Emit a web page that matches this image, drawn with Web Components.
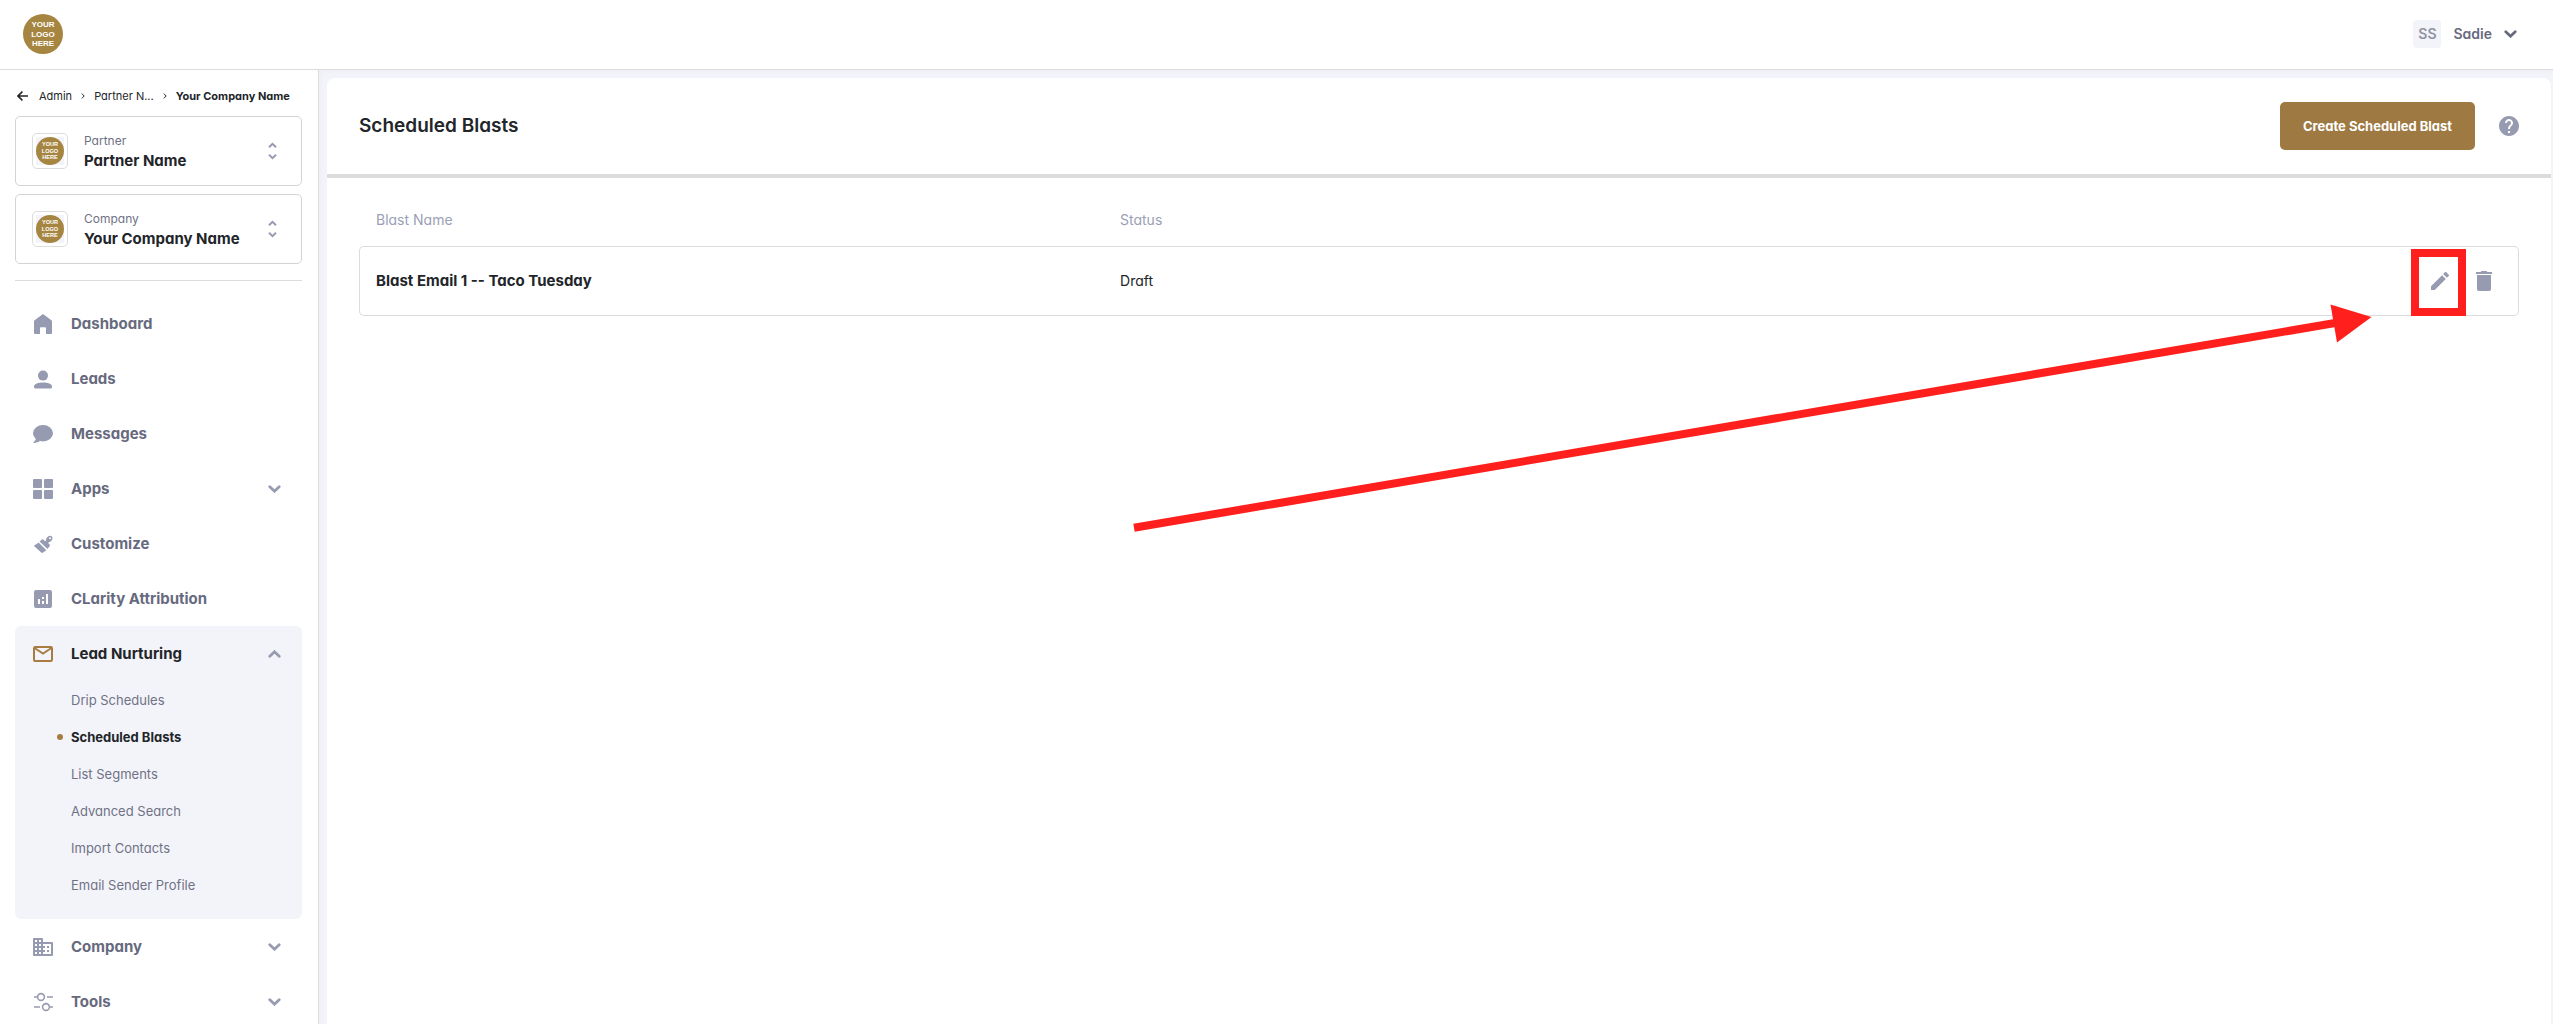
<!DOCTYPE html>
<html lang="en">
<head>
<meta charset="utf-8">
<title>Scheduled Blasts</title>
<style>
  :root {
    --ink: #222529;
    --nav: #676a7e;
    --muted: #6f7286;
    --icon: #979bb1;
    --line: #dcdcde;
    --wash: #f3f4f9;
    --brand: #9e7942;
  }
  html, body { margin: 0; height: 100%; }
  body {
    font-family: Inter, "Open Sans", sans-serif;
    font-feature-settings: "cv11";
    font-size: 14px;
    line-height: 20px;
    color: var(--ink);
    background: #fff;
  }
</style>
</head>
<body>
<app-shell>
  <top-bar slot="top" initials="SS" name="Sadie"></top-bar>
  <side-bar slot="side">
    <bread-crumbs slot="head"></bread-crumbs>
    <account-picker slot="head" label="Partner" name="Partner Name"></account-picker>
    <account-picker slot="head" label="Company" name="Your Company Name"></account-picker>
    <nav-item icon="home">Dashboard</nav-item>
    <nav-item icon="person">Leads</nav-item>
    <nav-item icon="chat">Messages</nav-item>
    <nav-item icon="apps" expandable>Apps</nav-item>
    <nav-item icon="brush">Customize</nav-item>
    <nav-item icon="chart">CLarity Attribution</nav-item>
    <nav-group icon="mail" label="Lead Nurturing">
      <sub-item>Drip Schedules</sub-item>
      <sub-item current>Scheduled Blasts</sub-item>
      <sub-item>List Segments</sub-item>
      <sub-item>Advanced Search</sub-item>
      <sub-item>Import Contacts</sub-item>
      <sub-item>Email Sender Profile</sub-item>
    </nav-group>
    <nav-item icon="building" expandable>Company</nav-item>
    <nav-item icon="tools" expandable>Tools</nav-item>
  </side-bar>
  <page-panel heading="Scheduled Blasts" action="Create Scheduled Blast">
    <blast-table></blast-table>
  </page-panel>
</app-shell>

<script>
const ICONS = {
  home: ['0 0 20 20', 20, 20, '<path d="M10 0L1.6 6.2Q1 6.7 1 7.4V19Q1 20 2 20H7V14Q7 13.3 7.8 13.3H12.2Q13 13.3 13 14V20H18Q19 20 19 19V7.4Q19 6.7 18.4 6.2Z"/>'],
  person: ['0 0 20 20', 20, 20, '<circle cx="10" cy="6.6" r="5"/><path d="M1 18V17.2C1 14.8 5.5 13.4 10 13.4S19 14.8 19 17.2V18Q19 19.4 17.8 19.4H2.2Q1 19.4 1 18Z"/>'],
  chat: ['0 0 20 20', 20, 20, '<ellipse cx="10" cy="9.2" rx="10" ry="8.2"/><path d="M2.4 13.5C3.6 15.6 1.6 17.3 .5 18.2C.1 18.6 .2 19 .8 19C3.4 18.9 5.6 18 7 17Z"/>'],
  apps: ['0 0 20 20', 20, 20, '<rect width="9" height="9" rx="1"/><rect x="11" width="9" height="9" rx="1"/><rect y="11" width="9" height="9" rx="1"/><rect x="11" y="11" width="9" height="9" rx="1"/>'],
  brush: ['0 0 20 20', 20, 20, '<path d="M5.5 8.6L13.4 16.2L10 18.6Q9 19.3 8.2 18.6L1.3 12.2Q.7 11.2 1.8 10.9Q4 10.6 5.5 8.6Z"/><path fill-rule="evenodd" d="M6.6 7.5L8.7 5.7Q9.6 5 10.5 5.8L11.7 7Q12.6 7.5 12.9 6.4C13.2 4 14.6 2.2 17 1.8A2.5 2.5 0 0 1 19.4 4.6C19.2 6.8 17.4 8 15.8 8.3Q14.8 8.6 15.6 9.5L16.6 10.6Q17.3 11.5 16.6 12.3L14.5 15ZM17 3.3A1 1 0 1 0 17.02 5.3A1 1 0 1 0 17 3.3Z"/>'],
  chart: ['0 0 20 20', 20, 20, '<path fill-rule="evenodd" d="M3 1H17Q19 1 19 3V17Q19 19 17 19H3Q1 19 1 17V3Q1 1 3 1ZM5 10V15H7V10ZM9 8V10H11V8ZM9 12V15H11V12ZM13 5V15H15V5Z"/>'],
  mail: ['0 0 20 20', 20, 20, '<rect x="1" y="3" width="18" height="14" rx="1.2" fill="none" stroke="currentColor" stroke-width="2"/><path d="M1.6 4L10 9.6L18.4 4" fill="none" stroke="currentColor" stroke-width="1.8"/>'],
  building: ['2 2 20 20', 20, 20, '<path fill-rule="evenodd" d="M12 7V4Q12 3 11 3H3Q2 3 2 4V20Q2 21 3 21H21Q22 21 22 20V8Q22 7 21 7ZM6 19H4v-2h2v2zm0-4H4v-2h2v2zm0-4H4V9h2v2zm0-4H4V5h2v2zm4 12H8v-2h2v2zm0-4H8v-2h2v2zm0-4H8V9h2v2zm0-4H8V5h2v2zm10 12h-8v-2h2v-2h-2v-2h2v-2h-2V9h8v10zm-2-8h-2v2h2v-2zm0 4h-2v2h2v-2z"/>'],
  tools: ['0 0 20 20', 20, 20, '<g fill="none" stroke="currentColor" stroke-width="1.6"><circle cx="8" cy="5" r="3.4"/><circle cx="13" cy="15" r="3.4"/><path d="M1 5H4.6M14 5H20M1 15H7M16.4 15H20"/></g>'],
  down: ['0 0 13 8', 13, 8, '<path d="M1.8 1.8L6.5 6.2L11.2 1.8" fill="none" stroke="currentColor" stroke-width="2.8" stroke-linecap="round"/>'],
  up: ['0 0 13 8', 13, 8, '<path d="M1.8 6.2L6.5 1.8L11.2 6.2" fill="none" stroke="currentColor" stroke-width="2.8" stroke-linecap="round"/>'],
  updown: ['0 0 9 18', 9, 18, '<path d="M1 5.2L4.5 1.8L8 5.2M1 12.8L4.5 16.2L8 12.8" fill="none" stroke="currentColor" stroke-width="2"/>'],
  crumb: ['0 0 4 6', 4, 6, '<path d="M.8 .6L3.2 3L.8 5.4" fill="none" stroke="currentColor"/>'],
  back: ['0 0 11 10', 11, 10, '<path d="M11 5H1.4M5.4 .6L1 5L5.4 9.4" fill="none" stroke="currentColor" stroke-width="1.6"/>'],
  help: ['2 2 20 20', 20, 20, '<path d="M12 2C6.48 2 2 6.48 2 12s4.48 10 10 10 10-4.48 10-10S17.52 2 12 2zm1 17h-2v-2h2v2zm2.07-7.75l-.9.92C13.45 12.9 13 13.5 13 15h-2v-.5c0-1.1.45-2.1 1.17-2.83l1.24-1.26c.37-.36.59-.86.59-1.41 0-1.1-.9-2-2-2s-2 .9-2 2H8c0-2.21 1.79-4 4-4s4 1.79 4 4c0 .88-.36 1.68-.93 2.25z"/>'],
  pencil: ['3 3 18 18', 18, 18, '<path d="M3 17.25V21h3.75L17.81 9.94l-3.75-3.75L3 17.25zM20.71 7.04a1 1 0 0 0 0-1.41l-2.34-2.34a1 1 0 0 0-1.41 0l-1.83 1.83 3.75 3.75 1.83-1.83z"/>'],
  trash: ['0 0 16 20', 16, 20, '<path d="M4.6 1L5.5 0H10.5L11.4 1H16V3H0V1ZM1 4H15V18Q15 20 13 20H3Q1 20 1 18Z"/>']
};

const define = (name, render) => customElements.define(name, class extends HTMLElement {
  connectedCallback() {
    if (this.shadowRoot) return;
    this.attachShadow({ mode: 'open' }).innerHTML = render(this);
  }
});

const RESET = 'button{font:inherit;color:inherit;background:none;border:0;padding:0;margin:0;text-align:left;cursor:pointer}a{color:inherit;text-decoration:none}*{box-sizing:border-box}';

define('ui-icon', el => {
  const [box, w, h, body] = ICONS[el.getAttribute('name')];
  return `<style>:host{display:block;flex:none}svg{display:block}</style>
    <svg width="${w}" height="${h}" viewBox="${box}" fill="currentColor" aria-hidden="true">${body}</svg>`;
});

define('brand-logo', () => `
  <style>
    :host{display:block;flex:none;width:var(--logo,40px);height:var(--logo,40px)}
    svg{display:block;width:100%;height:100%}
    text{font:700 8px "Liberation Sans",sans-serif;fill:#fff;text-anchor:middle}
  </style>
  <svg viewBox="0 0 40 40">
    <circle cx="20" cy="20" r="20" fill="#a68541"/>
    <text x="20" y="13">YOUR</text><text x="20" y="23">LOGO</text><text x="20" y="32">HERE</text>
  </svg>`);

define('app-shell', () => `
  <style>
    :host{display:flex;flex-direction:column;height:100vh;overflow:hidden}
    .row{display:flex;flex:1;min-height:0;background:var(--wash)}
    main{flex:1;min-width:0;display:flex;padding:8px 2px 0 8px;box-shadow:inset 3px 3px 5px -2px rgba(60,60,90,.03)}
    main ::slotted(*){flex:1}
  </style>
  <slot name="top"></slot>
  <div class="row"><slot name="side"></slot><main><slot></slot></main></div>`);

define('top-bar', el => `
  <style>${RESET}
    :host{display:block}
    header{display:flex;align-items:center;justify-content:space-between;height:70px;padding:0 36px 1px 23px;border-bottom:1px solid var(--line);background:#fff}
    button{display:flex;align-items:center;gap:12px;color:var(--nav);font-weight:600}
    .avatar{width:28px;height:28px;line-height:28px;border-radius:4px;background:var(--wash);color:#8f93a3;text-align:center}
  </style>
  <header>
    <a href="#" aria-label="Home"><brand-logo></brand-logo></a>
    <button><span class="avatar">${el.getAttribute('initials')}</span><span>${el.getAttribute('name')}</span><ui-icon name="down"></ui-icon></button>
  </header>`);

define('side-bar', () => `
  <style>${RESET}
    :host{display:block;flex:none;width:319px;box-sizing:border-box;padding:14px 16px 0 15px;border-right:1px solid var(--line);background:#fff;overflow:hidden auto;scrollbar-width:none}
    .head{display:flex;flex-direction:column;gap:8px;padding-bottom:16px;border-bottom:1px solid var(--line);margin-bottom:15px}
    nav{display:flex;flex-direction:column}
  </style>
  <div class="head"><slot name="head"></slot></div>
  <nav><slot></slot></nav>`);

define('bread-crumbs', () => `
  <style>${RESET}
    :host{display:block;font-size:11px;line-height:24px}
    nav{display:flex;align-items:center;gap:9px;white-space:nowrap;padding-left:2px}
    .back{margin-right:2px}
    b{font-weight:700}
  </style>
  <nav aria-label="Breadcrumb">
    <a class="back" href="#" aria-label="Back"><ui-icon name="back"></ui-icon></a>
    <a href="#">Admin</a><ui-icon name="crumb"></ui-icon><a href="#">Partner N...</a><ui-icon name="crumb"></ui-icon><b>Your Company Name</b>
  </nav>`);

define('account-picker', el => `
  <style>${RESET}
    :host{display:block}
    button{display:flex;align-items:center;width:100%;height:70px;padding:0 24px 0 16px;gap:16px;border:1px solid #d2d3d5;border-radius:5px}
    .thumb{--logo:28px;flex:none;padding:3px;border:1px solid var(--line);border-radius:5px}
    .thumb brand-logo{background:var(--wash)}
    .text{flex:1;min-width:0}
    .label,.name{display:block}
    .label{font-size:12px;color:var(--muted)}
    .name{font-size:15px;font-weight:700}
    ui-icon{color:var(--icon)}
  </style>
  <button>
    <span class="thumb"><brand-logo></brand-logo></span>
    <span class="text"><span class="label">${el.getAttribute('label')}</span><span class="name">${el.getAttribute('name')}</span></span>
    <ui-icon name="updown"></ui-icon>
  </button>`);

const ENTRY = `
  .entry{display:flex;align-items:center;gap:18px;width:100%;height:55px;padding:0 21px 0 18px;font-size:15px;font-weight:700;color:var(--nav)}
  .label{flex:1;white-space:nowrap}
  ui-icon{color:var(--icon)}`;

define('nav-item', el => {
  const open = el.hasAttribute('expandable');
  const tag = open ? 'button' : 'a href="#"';
  return `<style>${RESET}:host{display:block}${ENTRY}</style>
    <${tag} class="entry"><ui-icon name="${el.getAttribute('icon')}"></ui-icon><span class="label"><slot></slot></span>${open ? '<ui-icon name="down"></ui-icon>' : ''}</${open ? 'button' : 'a'}>`;
});

define('nav-group', el => `
  <style>${RESET}
    :host{display:block;padding-bottom:16px;border-radius:6px;background:var(--wash)}
    ${ENTRY}
    .entry{color:var(--ink)}
    .lead{color:#a67c42}
  </style>
  <button class="entry" aria-expanded="true"><ui-icon class="lead" name="${el.getAttribute('icon')}"></ui-icon><span class="label">${el.getAttribute('label')}</span><ui-icon name="up"></ui-icon></button>
  <slot></slot>`);

define('sub-item', el => {
  const on = el.hasAttribute('current');
  return `<style>${RESET}
    :host{display:block}
    a{display:flex;align-items:center;gap:8px;height:37px;padding-left:42px;font-size:13px;color:${on ? 'var(--ink)' : 'var(--muted)'};font-weight:${on ? 700 : 400}}
    i{width:6px;height:6px;border-radius:3px;background:${on ? '#a67c42' : 'none'}}
  </style>
  <a href="#"><i></i><slot></slot></a>`;
});

define('page-panel', el => `
  <style>${RESET}
    :host{display:block;min-width:0;background:#fff;border-radius:8px 8px 0 0}
    header{display:flex;align-items:center;gap:24px;height:100px;padding:0 32px;border-bottom:4px solid #dcdcdc}
    h1{flex:1;margin:0;font-size:19px;line-height:24px;font-weight:600}
    .primary{height:48px;min-width:195px;padding:0 16px;border-radius:5px;background:var(--brand);color:#fff;font-size:13px;font-weight:700;text-align:center}
    .help{color:var(--icon)}
    section{padding:32px}
  </style>
  <header><h1>${el.getAttribute('heading')}</h1><button class="primary">${el.getAttribute('action')}</button><button class="help" aria-label="Help"><ui-icon name="help"></ui-icon></button></header>
  <section><slot></slot></section>`);

define('blast-table', () => `
  <style>${RESET}
    :host{display:block;position:relative}
    table{width:100%;table-layout:fixed;border-collapse:separate;border-spacing:0;text-align:left}
    th{height:36px;padding:0 17px 16px;font-weight:400;color:#9b9fb5}
    td{height:70px;padding:0 17px;border:solid #dcdcde;border-width:1px 0}
    td:first-child{border-left-width:1px;border-radius:5px 0 0 5px;padding-left:16px;font-size:15px;font-weight:700}
    td:last-child{border-right-width:1px;border-radius:0 5px 5px 0;padding-right:26px}
    th,td{padding-left:18px}
    th:first-child{padding-left:17px}
    .name{width:34.4%}
    .actions{display:flex;align-items:center;justify-content:flex-end;gap:27px;color:var(--icon)}
    .edit{position:relative}
    .mark{position:absolute;left:-20px;top:-23px;width:55px;height:67px;border:8px solid #ff201d}
    .arrow{position:absolute;top:90px;right:144px;pointer-events:none}
  </style>
  <table>
    <thead><tr><th class="name">Blast Name</th><th>Status</th><th aria-label="Actions"></th></tr></thead>
    <tbody><tr>
      <td>Blast Email 1 -- Taco Tuesday</td>
      <td>Draft</td>
      <td><div class="actions">
        <button class="edit" aria-label="Edit"><ui-icon name="pencil"></ui-icon><span class="mark"></span></button>
        <button aria-label="Delete"><ui-icon name="trash"></ui-icon></button>
      </div></td>
    </tr></tbody>
  </table>
  <svg class="arrow" width="1245" height="240" viewBox="0 0 1245 240" aria-hidden="true">
    <path d="M4 227.8L1208 22.5" stroke="#ff201d" stroke-width="8"/>
    <path d="M1200.5 4.5L1241.5 17L1207 42.5Z" fill="#ff201d"/>
  </svg>`);
</script>
</body>
</html>
